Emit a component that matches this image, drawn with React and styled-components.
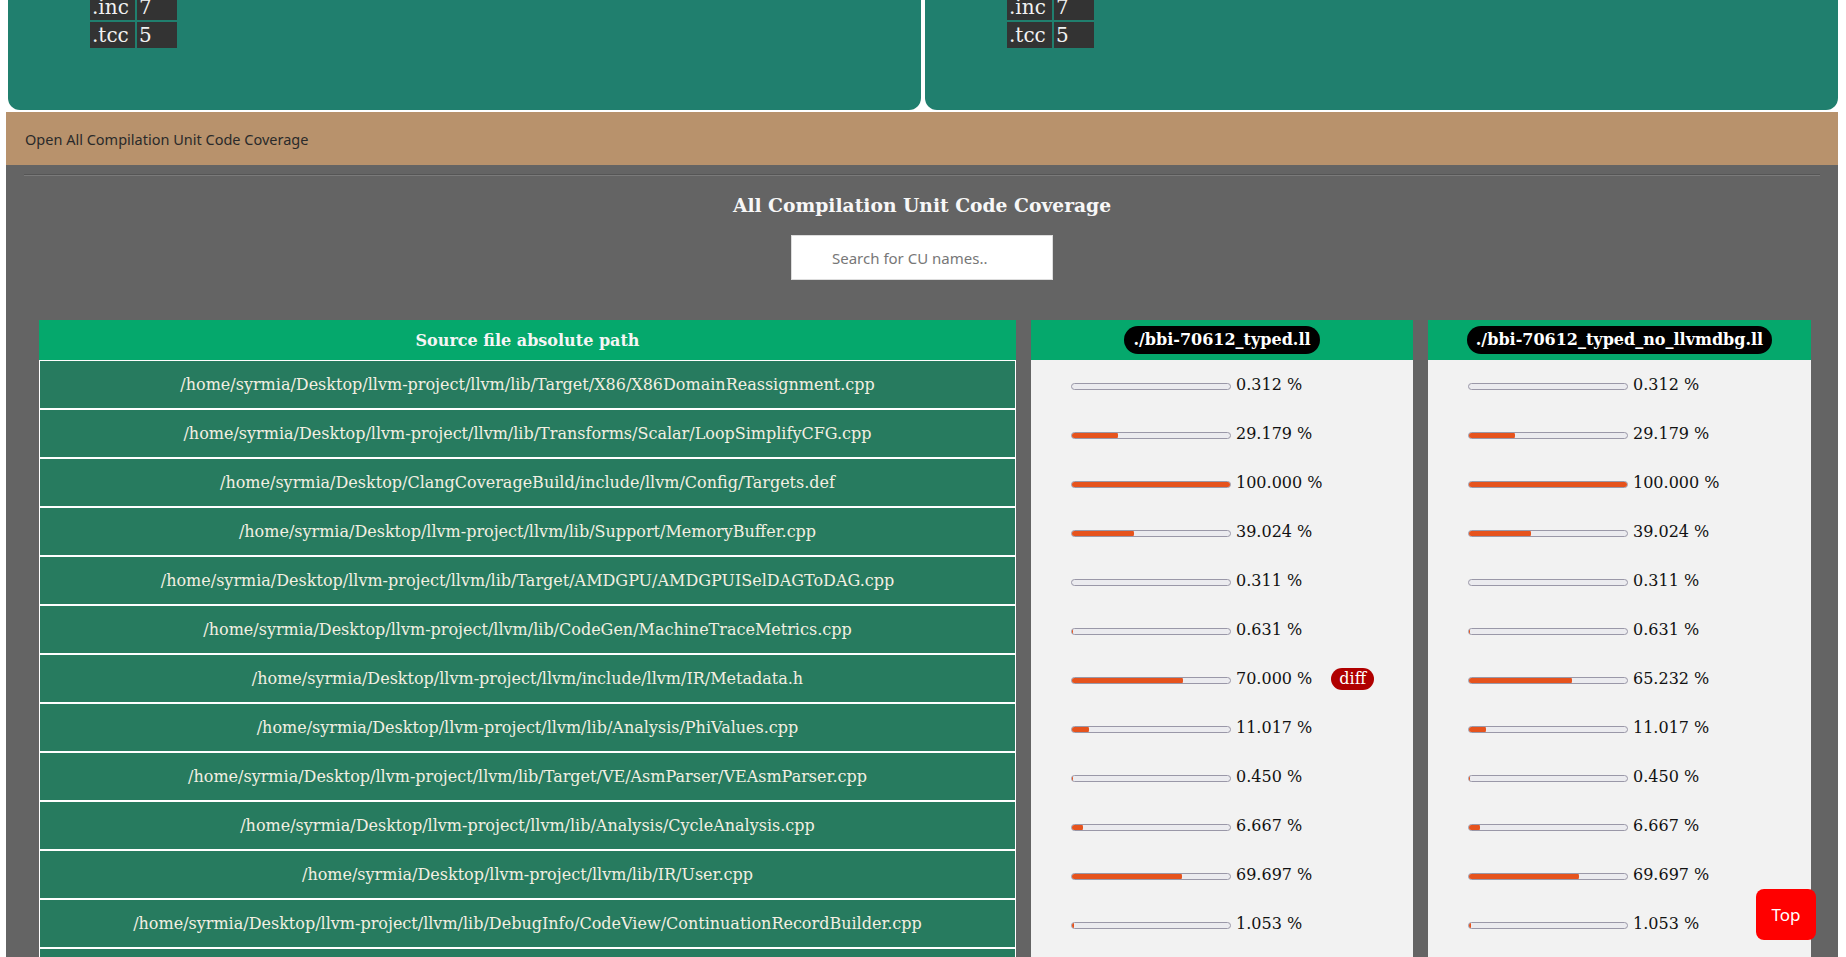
import React from "react";
import styled, { createGlobalStyle } from "styled-components";

const GlobalStyle = createGlobalStyle`
  html, body {
    margin: 0;
    padding: 0;
    background: #ffffff;
    overflow: hidden;
  }
  body {
    font-family: "DejaVu Serif", serif;
  }
`;

const Page = styled.div`
  width: 1846px;
`;

const PanelsRow = styled.div`
  display: flex;
  gap: 4px;
  padding: 0 8px;
`;

const Panel = styled.section`
  flex: 1;
  height: 110px;
  overflow: hidden;
  background: #207f6e;
  border-radius: 0 0 12px 12px;
  padding-left: 80px;
  box-sizing: border-box;
`;

const ExtTable = styled.table`
  margin-top: -8px;
  border-spacing: 2px;
  font-family: "DejaVu Serif", serif;
  font-size: 20px;
  line-height: 26px;
  color: #f2f2f2;
`;

const ExtCell = styled.td`
  background: #333333;
  padding: 0 2px;
  width: ${(p) => p.$w}px;
  white-space: nowrap;
`;

const CollapseButton = styled.button`
  display: block;
  box-sizing: border-box;
  width: calc(100% - 14px);
  margin: 2px 8px 0 6px;
  height: 53px;
  border: none;
  background: #b8926c;
  text-align: left;
  padding: 0 19px;
  font-family: "Noto Sans", "Open Sans", sans-serif;
  font-size: 14.5px;
  color: #2a2a2a;
  cursor: pointer;
`;

const Content = styled.div`
  margin: 0 8px 0 6px;
  background: #646464;
  padding: 9px 18px 200px;
  height: 900px;
  box-sizing: border-box;
`;

const Rule = styled.hr`
  margin: 0;
  border: none;
  border-top: 1px solid #555555;
  border-bottom: 1px solid #7a7a7a;
`;

const Title = styled.h3`
  margin: 18px 0 19px;
  text-align: center;
  font-family: "DejaVu Serif", serif;
  font-weight: bold;
  font-size: 18.72px;
  line-height: 22px;
  color: #f7f7f7;
`;

const SearchRow = styled.div`
  display: flex;
  justify-content: center;
`;

const SearchInput = styled.input`
  width: 262px;
  height: 45px;
  box-sizing: border-box;
  border: 1px solid #dddddd;
  background: #ffffff;
  padding: 12px 20px 12px 40px;
  font-family: "Noto Sans", "Open Sans", sans-serif;
  font-size: 15px;
  outline: none;
  &::placeholder {
    color: #777777;
  }
`;

const TablesRow = styled.div`
  display: flex;
  align-items: flex-start;
  gap: 15px;
  margin-top: 40px;
  padding-left: 15px;
`;

const DataTable = styled.table`
  width: ${(p) => p.$w}px;
  border-collapse: separate;
  border-spacing: 0;
  font-family: "DejaVu Serif", serif;
  font-size: 16px;
  table-layout: fixed;
`;

const HeadCell = styled.th`
  height: 40px;
  padding: 0;
  background: #05a86c;
  color: #f5f5f5;
  font-weight: bold;
  font-size: 16px;
  text-align: center;
  vertical-align: middle;
`;

const Pill = styled.span`
  display: inline-block;
  background: #000000;
  color: #ffffff;
  border-radius: 14px;
  padding: 0 9px;
  line-height: 28px;
  font-weight: bold;
`;

const PathCell = styled.td`
  background: #277b5f;
  border: 1px solid #ffffff;
  padding: 14px 8px;
  line-height: 19px;
  text-align: center;
  color: #f3efe2;
  white-space: nowrap;
`;

const CovCell = styled.td`
  background: #f2f2f2;
  border: 1px solid #f2f2f2;
  padding: 14px 8px 14px 39px;
  line-height: 19px;
`;

const CovLine = styled.div`
  display: flex;
  align-items: center;
  height: 19px;
`;

const Track = styled.div`
  width: 160px;
  height: 7px;
  margin-top: 3px;
  box-sizing: border-box;
  border: 1px solid #9a98a8;
  border-radius: 4px;
  background: #ebebef;
  overflow: hidden;
  display: flex;
`;

const Fill = styled.div`
  height: 100%;
  background: #e6531d;
  border-radius: 3px;
  margin: -1px 0 -1px -1px;
  min-height: 7px;
`;

const Percent = styled.span`
  margin-left: 5px;
  color: #111111;
  white-space: nowrap;
`;

const DiffBadge = styled.span`
  margin-left: 19px;
  background: #b00000;
  color: #ffffff;
  border-radius: 11px;
  padding: 0 8px;
  line-height: 22px;
  height: 22px;
  display: inline-block;
  font-family: "DejaVu Serif", serif;
  font-size: 16px;
`;

const TopButton = styled.button`
  position: fixed;
  right: 30px;
  bottom: 17px;
  width: 60px;
  height: 51px;
  border: none;
  border-radius: 8px;
  background: #ff0000;
  color: #ffffff;
  font-family: "Noto Sans", "Open Sans", sans-serif;
  font-size: 17px;
  cursor: pointer;
`;

const panels = [
  [
    { ext: ".inc", n: "7" },
    { ext: ".tcc", n: "5" },
  ],
  [
    { ext: ".inc", n: "7" },
    { ext: ".tcc", n: "5" },
  ],
];

const P = "/home/syrmia/Desktop/llvm-project/llvm/";

const rows = [
  { path: P + "lib/Target/X86/X86DomainReassignment.cpp", a: 0.312, b: 0.312 },
  { path: P + "lib/Transforms/Scalar/LoopSimplifyCFG.cpp", a: 29.179, b: 29.179 },
  { path: "/home/syrmia/Desktop/ClangCoverageBuild/include/llvm/Config/Targets.def", a: 100, b: 100 },
  { path: P + "lib/Support/MemoryBuffer.cpp", a: 39.024, b: 39.024 },
  { path: P + "lib/Target/AMDGPU/AMDGPUISelDAGToDAG.cpp", a: 0.311, b: 0.311 },
  { path: P + "lib/CodeGen/MachineTraceMetrics.cpp", a: 0.631, b: 0.631 },
  { path: P + "include/llvm/IR/Metadata.h", a: 70, b: 65.232, diff: true },
  { path: P + "lib/Analysis/PhiValues.cpp", a: 11.017, b: 11.017 },
  { path: P + "lib/Target/VE/AsmParser/VEAsmParser.cpp", a: 0.45, b: 0.45 },
  { path: P + "lib/Analysis/CycleAnalysis.cpp", a: 6.667, b: 6.667 },
  { path: P + "lib/IR/User.cpp", a: 69.697, b: 69.697 },
  { path: P + "lib/DebugInfo/CodeView/ContinuationRecordBuilder.cpp", a: 1.053, b: 1.053 },
  { path: P + "lib/Transforms/Utils/Local.cpp", a: 12.5, b: 12.5 },
];

function Coverage({ value, diff }) {
  return (
    <CovCell>
      <CovLine>
        <Track>
          <Fill style={{ width: `calc(${value}% + 1px)` }} />
        </Track>
        <Percent>{value.toFixed(3)} %</Percent>
        {diff && <DiffBadge>diff</DiffBadge>}
      </CovLine>
    </CovCell>
  );
}

function CoverageTable({ name, width, field }) {
  return (
    <DataTable $w={width}>
      <thead>
        <tr>
          <HeadCell>
            <Pill>{name}</Pill>
          </HeadCell>
        </tr>
      </thead>
      <tbody>
        {rows.map((r, i) => (
          <tr key={i}>
            <Coverage value={r[field]} diff={field === "a" && r.diff} />
          </tr>
        ))}
      </tbody>
    </DataTable>
  );
}

export default function App() {
  return (
    <Page>
      <GlobalStyle />
      <PanelsRow>
        {panels.map((list, i) => (
          <Panel key={i}>
            <ExtTable>
              <tbody>
                {list.map((r) => (
                  <tr key={r.ext}>
                    <ExtCell $w={41}>{r.ext}</ExtCell>
                    <ExtCell $w={36}>{r.n}</ExtCell>
                  </tr>
                ))}
              </tbody>
            </ExtTable>
          </Panel>
        ))}
      </PanelsRow>
      <CollapseButton>Open All Compilation Unit Code Coverage</CollapseButton>
      <Content>
        <Rule />
        <Title>All Compilation Unit Code Coverage</Title>
        <SearchRow>
          <SearchInput placeholder="Search for CU names.." />
        </SearchRow>
        <TablesRow>
          <DataTable $w={977}>
            <thead>
              <tr>
                <HeadCell>Source file absolute path</HeadCell>
              </tr>
            </thead>
            <tbody>
              {rows.map((r, i) => (
                <tr key={i}>
                  <PathCell>{r.path}</PathCell>
                </tr>
              ))}
            </tbody>
          </DataTable>
          <CoverageTable name="./bbi-70612_typed.ll" width={382} field="a" />
          <CoverageTable name="./bbi-70612_typed_no_llvmdbg.ll" width={383} field="b" />
        </TablesRow>
      </Content>
      <TopButton>Top</TopButton>
    </Page>
  );
}
